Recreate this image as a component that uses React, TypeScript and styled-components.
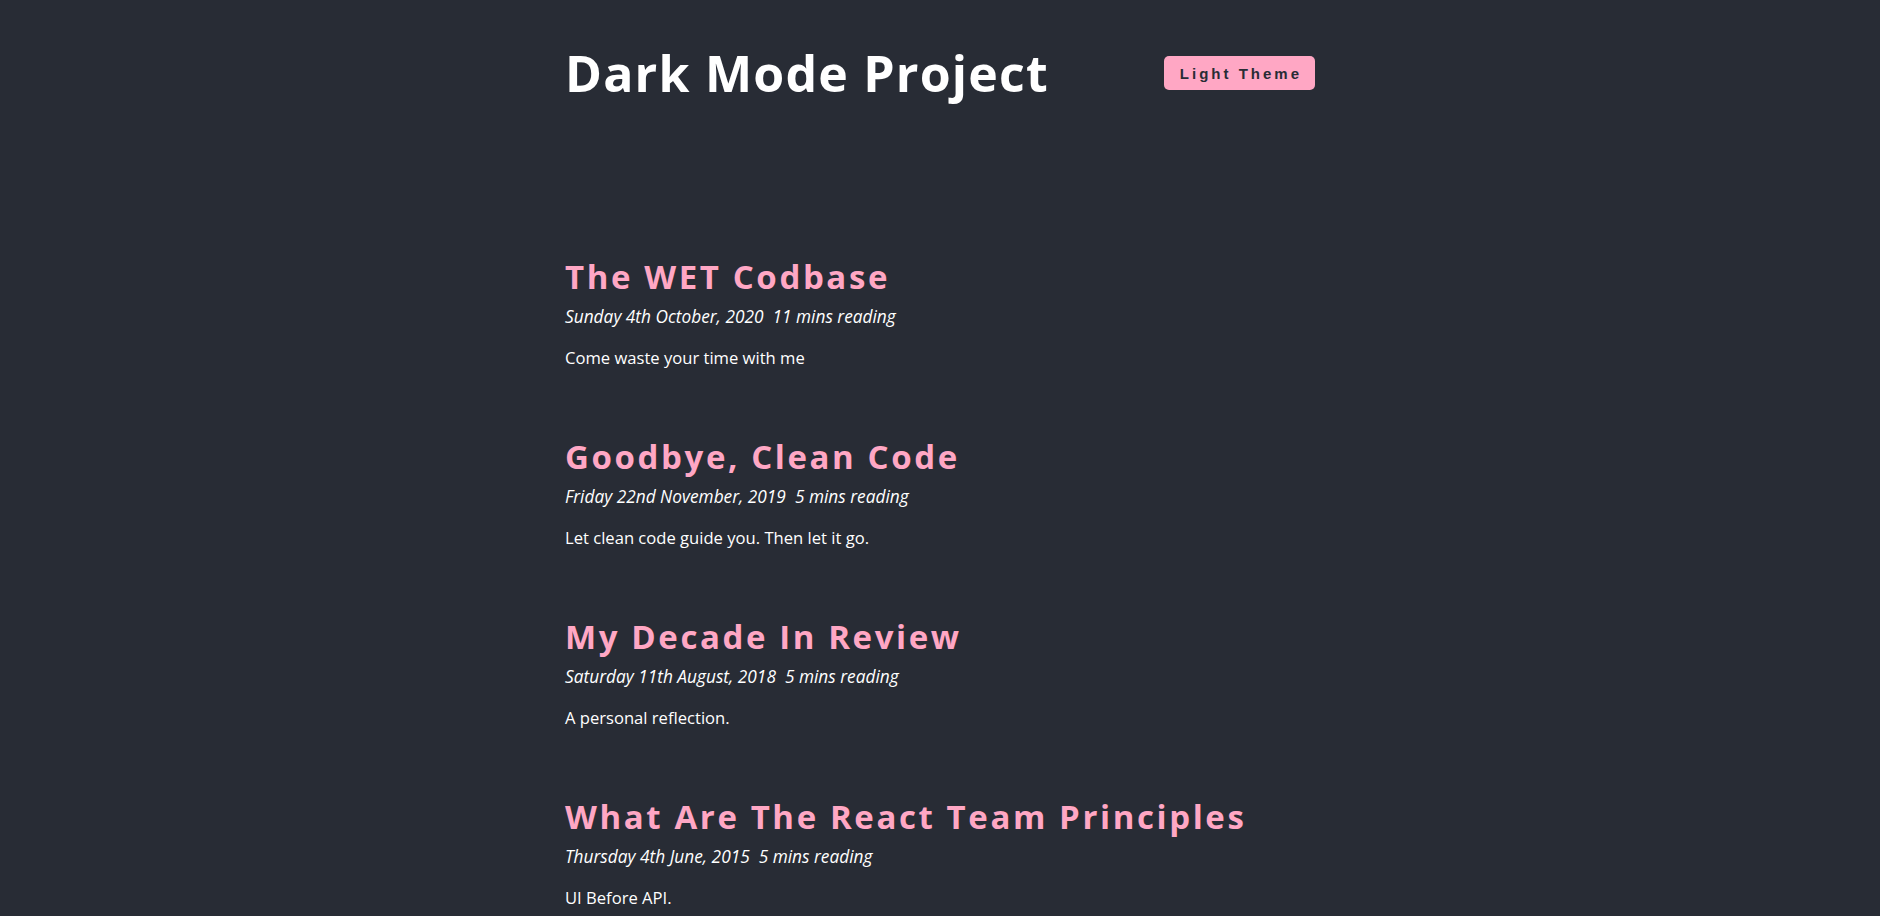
import React from "react";
import styled, { createGlobalStyle } from "styled-components";

const GlobalStyle = createGlobalStyle`
  html, body {
    margin: 0;
    padding: 0;
    background: #282c35;
  }
  body {
    font-family: "Open Sans", "Noto Sans", sans-serif;
    color: #ffffff;
    -webkit-font-smoothing: antialiased;
  }
`;

const Page = styled.div`
  min-height: 916px;
  background: #282c35;
`;

const Container = styled.div`
  max-width: 750px;
  margin: 0 auto;
`;

const Header = styled.header`
  display: flex;
  justify-content: space-between;
  align-items: flex-start;
  padding-top: 49px;
`;

const SiteTitle = styled.h1`
  margin: 0;
  font-size: 50px;
  line-height: 48px;
  font-weight: 700;
  color: #ffffff;
  letter-spacing: 1.2px;
`;

const ThemeButton = styled.button`
  margin-top: 7px;
  height: 34px;
  padding: 0 13px 0 16px;
  border: none;
  border-radius: 5px;
  background: #ffa7c4;
  color: #282c35;
  font-family: "Liberation Sans", Arial, sans-serif;
  font-size: 15px;
  font-weight: 700;
  letter-spacing: 3px;
  cursor: pointer;
`;

const Main = styled.main`
  padding-top: 160px;
`;

const Article = styled.article`
  margin-bottom: 65px;
`;

const PostTitle = styled.h2`
  margin: 0;
  font-size: 33px;
  line-height: 40px;
  font-weight: 700;
  letter-spacing: 2.6px;
  color: #ffa7c4;
`;

const PostMeta = styled.p`
  margin: 8px 0 0;
  font-size: 17.3px;
  line-height: 24px;
  font-style: italic;
  color: #ffffff;
`;

const ReadTime = styled.span`
  margin-left: 9px;
`;

const Excerpt = styled.p`
  margin: 15px 0 0;
  font-size: 16.6px;
  line-height: 28px;
  color: #ffffff;
`;

const posts = [
  {
    title: "The WET Codbase",
    date: "Sunday 4th October, 2020",
    read: "11 mins reading",
    excerpt: "Come waste your time with me",
  },
  {
    title: "Goodbye, Clean Code",
    date: "Friday 22nd November, 2019",
    read: "5 mins reading",
    excerpt: "Let clean code guide you. Then let it go.",
  },
  {
    title: "My Decade In Review",
    date: "Saturday 11th August, 2018",
    read: "5 mins reading",
    excerpt: "A personal reflection.",
  },
  {
    title: "What Are The React Team Principles",
    date: "Thursday 4th June, 2015",
    read: "5 mins reading",
    excerpt: "UI Before API.",
  },
];

export default function App() {
  return (
    <Page>
      <GlobalStyle />
      <Container>
        <Header>
          <SiteTitle>Dark Mode Project</SiteTitle>
          <ThemeButton>Light Theme</ThemeButton>
        </Header>
        <Main>
          {posts.map((p) => (
            <Article key={p.title}>
              <PostTitle>{p.title}</PostTitle>
              <PostMeta>
                {p.date}
                <ReadTime>{p.read}</ReadTime>
              </PostMeta>
              <Excerpt>{p.excerpt}</Excerpt>
            </Article>
          ))}
        </Main>
      </Container>
    </Page>
  );
}
